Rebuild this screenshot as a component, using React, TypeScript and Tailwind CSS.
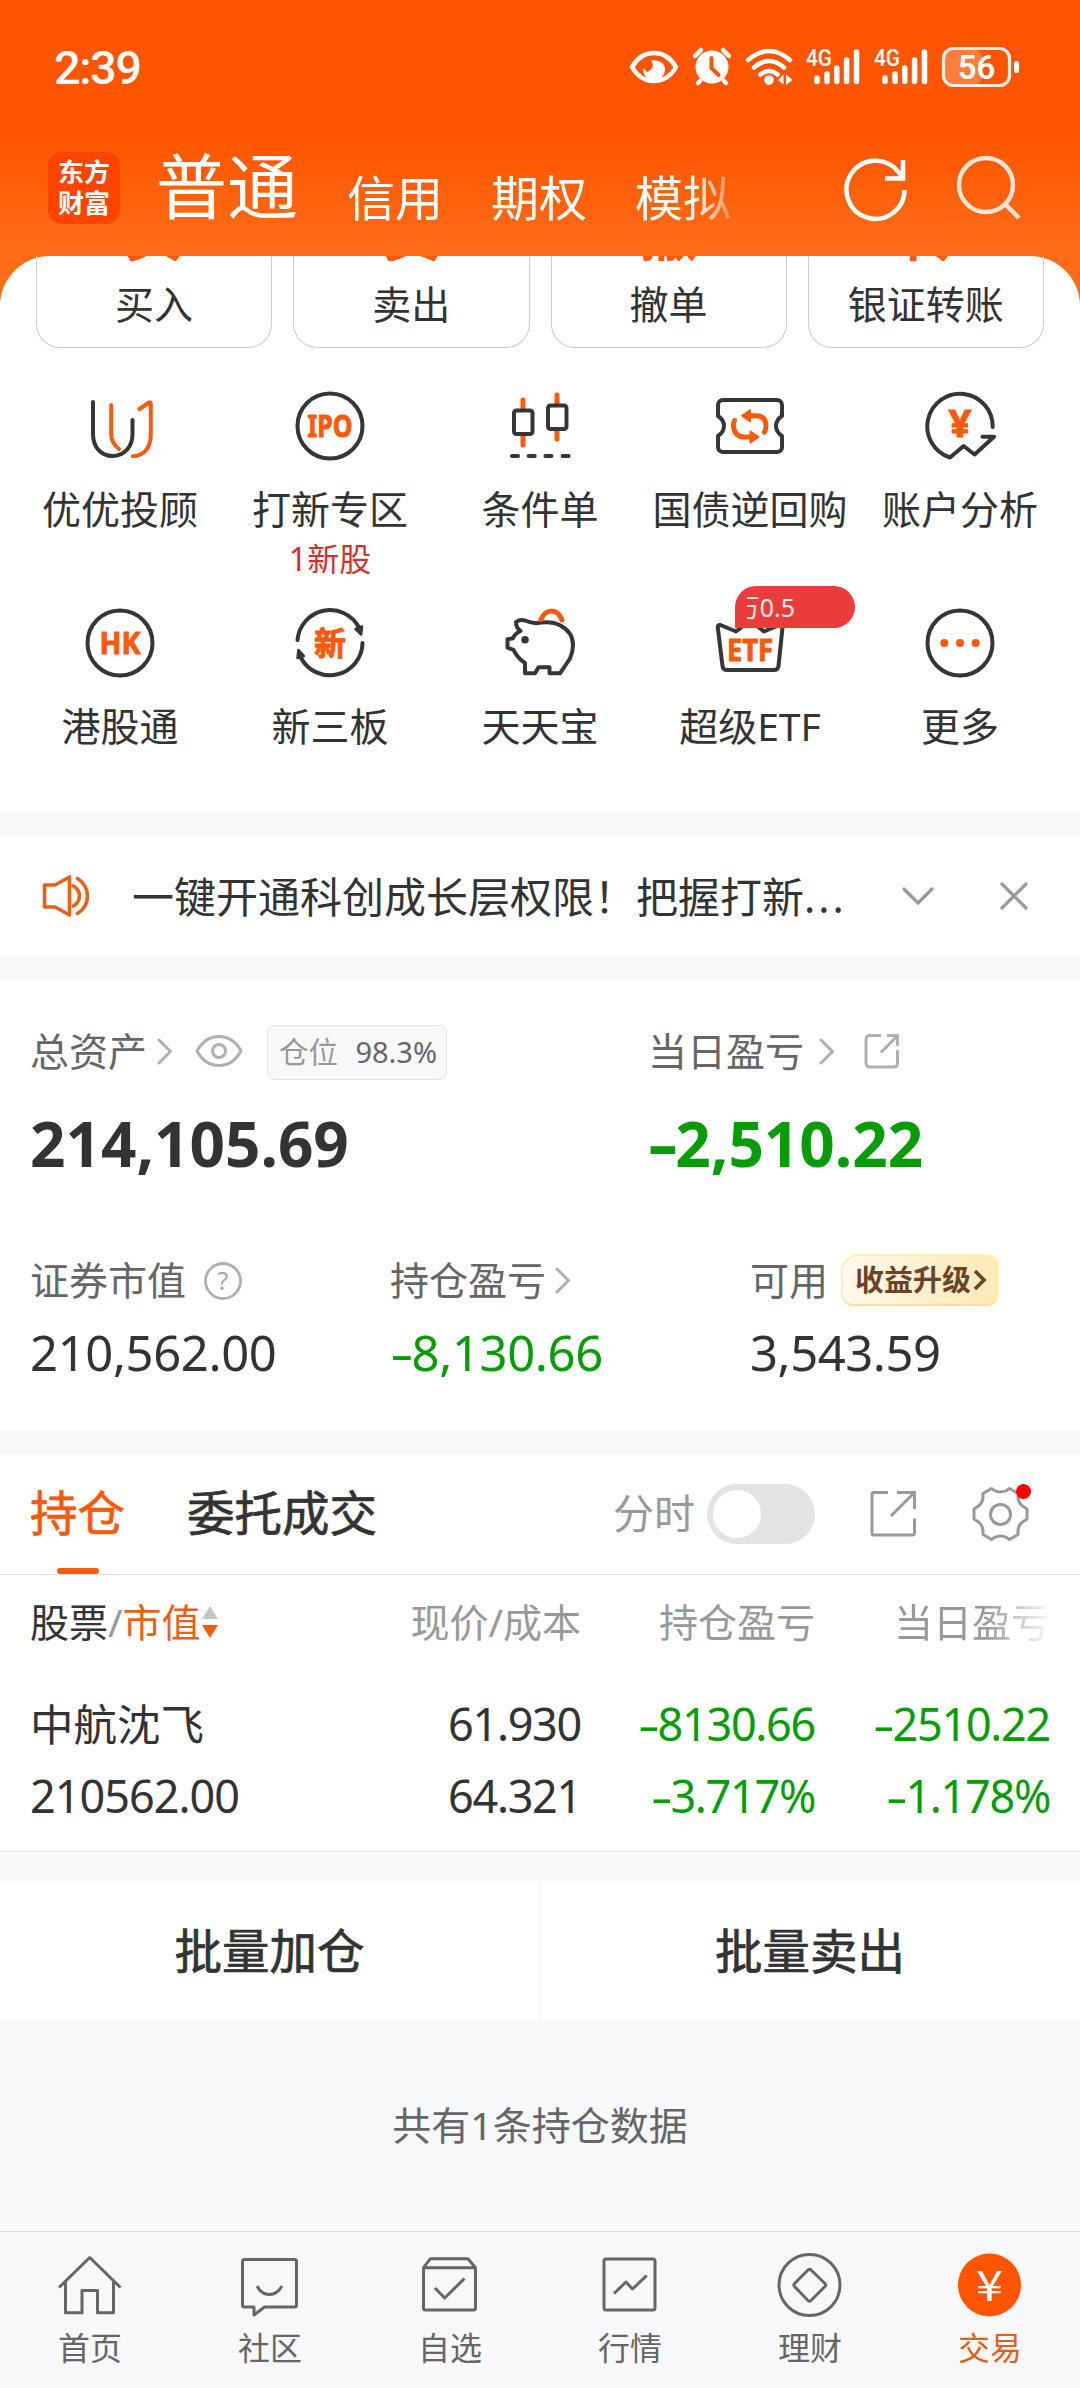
import type { ReactNode } from 'react';

const DARK = '#363636';
const ORANGE = '#fa5a0a';

const trades = [
  { glyph: '买', label: '买入' },
  { glyph: '卖', label: '卖出' },
  { glyph: '撤', label: '撤单' },
  { glyph: '转', label: '银证转账' },
];

function IconText({ children, y, size, width }: { children: string; y: number; size: number; width: number }) {
  return (
    <text
      x="36"
      y={y}
      fontSize={size}
      fontWeight="700"
      textAnchor="middle"
      textLength={width}
      lengthAdjust="spacingAndGlyphs"
      fill={ORANGE}
      stroke={ORANGE}
      strokeWidth="1"
    >
      {children}
    </text>
  );
}

const entries: { label: string; note?: string; badge?: boolean; icon: ReactNode }[] = [
  {
    label: '优优投顾',
    icon: (
      <>
        <path d="M9 12V44c0 13 8 22 19.500 22S48.500 57 48.500 44V30" stroke={DARK} />
        <path d="M27.200 15V44c0 7 2.500 11 7.800 15M55.500 19l9.500-6.500q1.800-.8 1.800 1.500V44c0 14-7 22-18 22.300" stroke={ORANGE} />
      </>
    ),
  },
  {
    label: '打新专区',
    note: '1新股',
    icon: (
      <>
        <circle cx="36" cy="36" r="32.500" stroke={DARK} />
        <IconText y={47} size={30} width={45}>IPO</IconText>
      </>
    ),
  },
  {
    label: '条件单',
    icon: (
      <>
        <path d="M19 10v9M19 46v9M53 5v9M53 41v8" stroke={ORANGE} strokeWidth="5" />
        <rect x="10" y="20.500" width="18.500" height="23.500" rx="2.500" stroke={DARK} />
        <rect x="44" y="15.500" width="18.500" height="23.500" rx="2.500" stroke={DARK} />
        <path d="M8 66h6M24.700 66h6M41.500 66h6M58.600 66h6" stroke={DARK} />
      </>
    ),
  },
  {
    label: '国债逆回购',
    icon: (
      <>
        <path d="M9 10H63a5 5 0 0 1 5 5V26q-6 4-6 10t6 10V57a5 5 0 0 1-5 5H9a5 5 0 0 1-5-5V46q6-4 6-10t-6-10V15a5 5 0 0 1 5-5z" stroke={DARK} />
        <path d="M35 25.700h7q10 0 10 10 0 4-1.600 6.500M20.500 30.500q-1.500 3-1 6.500 1.500 10 11 10h6" stroke={ORANGE} strokeWidth="5" />
        <path d="M28 25.700l8-5.500v11zM44.500 47l-8-5.500v11z" fill={ORANGE} stroke={ORANGE} strokeWidth="2" />
      </>
    ),
  },
  {
    label: '账户分析',
    icon: (
      <>
        <path d="M68.700 37A32.700 32.700 0 1 0 26 67.500L39.600 56l11 8.500L70 46.700H58.500" stroke={DARK} />
        <IconText y={47} size={37} width={23}>¥</IconText>
      </>
    ),
  },
  {
    label: '港股通',
    icon: (
      <>
        <circle cx="36" cy="36" r="32.500" stroke={DARK} />
        <IconText y={47} size={30} width={41}>HK</IconText>
      </>
    ),
  },
  {
    label: '新三板',
    icon: (
      <>
        <path d="M3.500 33A32.700 32.700 0 0 1 65 20.500M68.500 36A32.700 32.700 0 0 1 7 51" stroke={DARK} />
        <path d="M61.500 22l6.500-2.500-.8 8zM4.500 43l-1 8 6.500-2z" fill={DARK} stroke={DARK} strokeWidth="2.500" />
        <IconText y={48} size={32} width={32}>新</IconText>
      </>
    ),
  },
  {
    label: '天天宝',
    icon: (
      <>
        <path
          d="M12 15q4-3 9-1.500 6 2.500 11 2.800 15-3 24 2C65 23 69 30 69 38q0 7-3 13.500L56 66.300H45.500v-6H34.500L31 66.300H21V56Q13.500 51 9.500 42.800L3.500 40.700V32.300l5.500-1q2-5 7.500-7.300Q12 21 12 15z"
          stroke={DARK}
        />
        <path d="M37 12.500C41 2 53 .5 58 13" stroke={ORANGE} strokeWidth="5" />
        <circle cx="21" cy="32.700" r="3.800" fill={DARK} />
      </>
    ),
  },
  {
    label: '超级ETF',
    badge: true,
    icon: (
      <>
        <path d="M6.500 18l15.500 6.500 14-11 14 11 15.500-6.500q3.300-.5 3 2.500L64.500 59q-.5 4-4.500 4H13q-4 0-4.500-4L3.800 20.500q-.3-3 2.700-2.500z" stroke={DARK} />
        <IconText y={53.500} size={31} width={46}>ETF</IconText>
      </>
    ),
  },
  {
    label: '更多',
    icon: (
      <>
        <circle cx="36" cy="36" r="32.500" stroke={DARK} />
        <g fill={ORANGE}>
          <circle cx="20.300" cy="36" r="4" />
          <circle cx="36" cy="36" r="4" />
          <circle cx="51.700" cy="36" r="4" />
        </g>
      </>
    ),
  },
];

const tabs: { label: string; active?: boolean; icon: ReactNode }[] = [
  {
    label: '首页',
    icon: <path d="M2 35.500L32.700 5.500 63.500 35.500M8.500 30V60.800H25V38.500H40.500V60.800H56.500V30" />,
  },
  {
    label: '社区',
    icon: <path d="M7.500 7.500H57.500q2 0 2 2V53q0 2-2 2H27.500L17 63V55H7.500q-2 0-2-2V9.500q0-2 2-2zM20 34q4.500 8.500 12.300 8.500T45 34" />,
  },
  {
    label: '自选',
    icon: <path d="M6.500 15.700L13.500 6.700H51L58.500 15.700V56q0 2-2 2H8.500q-2 0-2-2zH58.500M18 36L27.700 46 47.500 26.500" />,
  },
  {
    label: '行情',
    icon: <path d="M9 7H56q2 0 2 2V56q0 2-2 2H9q-2 0-2-2V9q0-2 2-2zM17 41.500L29 30l6.500 7L49.700 23.500" />,
  },
  {
    label: '理财',
    icon: (
      <>
        <circle cx="32.500" cy="33" r="30.500" />
        <path d="M31 18q1.500-1.500 3 0L48 31.500q1.500 1.500 0 3L34 48.500q-1.500 1.500-3 0L17.500 34.500q-1.500-1.500 0-3z" />
      </>
    ),
  },
  {
    label: '交易',
    active: true,
    icon: (
      <>
        <circle cx="32.500" cy="33" r="31.500" fill="#ff5500" stroke="none" />
        <text x="32.500" y="49" fontSize="42" textAnchor="middle" textLength="27" lengthAdjust="spacingAndGlyphs" fill="#fff" stroke="none" className="font-['Noto_Sans_CJK_SC',sans-serif]">¥</text>
      </>
    ),
  },
];

function Chevron({ className = '' }: { className?: string }) {
  return (
    <svg width="18" height="28" viewBox="0 0 18 28" fill="none" stroke="#b0b0b0" strokeWidth="3" strokeLinecap="round" strokeLinejoin="round" className={className}>
      <path d="M3 3l11.500 11.500L3 26" />
    </svg>
  );
}

// Loss figure in green, with a wide minus sign
function Loss({ children }: { children: string }) {
  return (
    <span className="text-[#059c05]">
      <span className="inline-block w-[0.440em] origin-left scale-x-150 text-left">-</span>
      {children}
    </span>
  );
}

function Signal() {
  return (
    <svg width="56" height="44" viewBox="0 0 56 44" fill="none" stroke="#fff" strokeWidth="5.500" strokeLinecap="round">
      <text x="0" y="22" fontSize="24" fontWeight="500" textLength="26" lengthAdjust="spacingAndGlyphs" fill="#fff" stroke="none" className="font-['Roboto',sans-serif]">4G</text>
      <path d="M11 34v3.500M21 30v7.500M30.800 24v13.500M40.600 16v21.500M50.500 8v29.500" />
    </svg>
  );
}

function StatusBar() {
  return (
    <div className="flex h-[132px] items-start pl-[54px] pr-[59px] pt-[44px] text-white">
      <div className="h-[46px] font-['Roboto',sans-serif] text-[47px] font-medium leading-[48px] tracking-[-1.500px]">2:39</div>
      <svg width="50" height="44" viewBox="0 0 50 44" fill="none" stroke="#fff" strokeWidth="4.500" className="ml-auto">
        <path d="M3 23Q11 9 25 9t22 14Q39 37 25 37T3 23z" strokeLinejoin="round" />
        <path d="M22 16q5 8-4 12l-4-4q0 11 10 12 11 0 12-10 0-10-14-10z" fill="#fff" stroke="none" />
      </svg>
      <svg width="42" height="44" viewBox="0 0 42 44" fill="none" stroke="#fff" strokeWidth="4.500" strokeLinecap="round" className="ml-[12px]">
        <circle cx="21" cy="23" r="16.500" fill="#fff" stroke="none" />
        <path d="M4 12l6-6M38 12l-6-6M9 37l-2 2M33 37l2 2" />
        <path d="M20.500 14v10l7 7" stroke="#ff5500" strokeWidth="4" />
      </svg>
      <svg width="50" height="44" viewBox="0 0 50 44" fill="none" stroke="#fff" strokeWidth="4.500" strokeLinecap="round" className="ml-[11px]">
        <path d="M4 16Q25-2 46 16M10 23.500q15-13 30 0M16.500 30.500q8.500-7 17 0" />
        <circle cx="25" cy="36" r="4.800" fill="#fff" stroke="none" />
        <path d="M34 36l5.500-5.500v10zM42 30.500l6.500 5.500-6.500 5z" fill="#fff" stroke="none" />
      </svg>
      <div className="ml-[12px] flex gap-[12px]">
        <Signal />
        <Signal />
      </div>
      <svg width="80" height="44" viewBox="2 0 80 44" fill="none" className="ml-[11px]">
        <rect x="6" y="6" width="37" height="34" rx="7" fill="#fff" fillOpacity=".24" />
        <rect x="4.500" y="4.500" width="66" height="37" rx="10" stroke="#fff" strokeOpacity=".9" strokeWidth="3.200" />
        <rect x="75" y="17" width="5" height="12" rx="2.500" fill="#fff" />
        <text x="37.500" y="34.500" fontSize="33" fontWeight="600" textAnchor="middle" fill="#fff" className="font-['Roboto',sans-serif]">56</text>
      </svg>
    </div>
  );
}

function Header() {
  return (
    <header className="flex h-[124px] items-start pl-[48px] text-white">
      <div className="mt-[20px] flex h-[72px] w-[72px] flex-col items-center justify-center rounded-[14px] bg-[#ff4400] text-[26px] font-bold leading-[31px]">
        <span>东方</span>
        <span>财富</span>
      </div>
      <div className="ml-[36px] mt-[13px] text-[71px] leading-[82px]">普通</div>
      <div className="ml-[49px] mt-[36px] flex gap-[48px] text-[48px] leading-[60px] [mask-image:linear-gradient(to_right,#000_345px,transparent_400px)]">
        <span>信用</span>
        <span>期权</span>
        <span>模拟</span>
      </div>
      <svg width="66" height="66" viewBox="0 0 66 66" fill="none" stroke="#fff" strokeWidth="4.500" className="ml-auto mt-[25px]">
        <path d="M61.500 33A29 29 0 1 1 55 14.500L61 22" />
        <path d="M60 3v18.500H42" />
      </svg>
      <svg width="66" height="66" viewBox="0 0 66 66" fill="none" stroke="#ffe3d3" strokeWidth="4.500" className="ml-[46px] mr-[59px] mt-[23px]">
        <circle cx="31" cy="30" r="27" />
        <path d="M50 49l14 14" />
      </svg>
    </header>
  );
}

function TradeCards() {
  return (
    <div className="flex h-[92px] gap-[21px] px-[36px]">
      {trades.map((t) => (
        <div key={t.label} className="flex flex-1 flex-col items-center overflow-hidden rounded-b-[24px] border-x border-b border-[#cccccc]">
          <div className="flex h-[5px] items-end overflow-hidden">
            <span className="-mb-[2px] text-[58px] font-bold leading-[58px] text-[#fa5a0a]">{t.glyph}</span>
          </div>
          <span className="mt-[13px] text-[39px] leading-[60px]">{t.label}</span>
        </div>
      ))}
    </div>
  );
}

function Entries() {
  return (
    <div className="grid grid-cols-5 px-[15px] pt-[42px]">
      {entries.map((e) => (
        <div key={e.label} className="relative flex h-[217px] flex-col items-center">
          <svg width="72" height="72" viewBox="0 0 72 72" fill="none" strokeWidth="4" strokeLinecap="round" strokeLinejoin="round">
            {e.icon}
          </svg>
          <span className="mt-[22px] whitespace-nowrap text-[39px] leading-[50px]">{e.label}</span>
          {e.note && <span className="mt-[5px] text-[32px] leading-[40px] text-[#d03030]">{e.note}</span>}
          {e.badge && (
            <div className="absolute left-[90px] top-[-21px] h-[42px] w-[120px] rounded-[21px] rounded-bl-none bg-[#eb3c3c] pl-[12px]">
              <div className="flex w-[48px] justify-end overflow-hidden whitespace-nowrap text-[25px] leading-[42px] text-white/90">
                <span>万0.5</span>
              </div>
            </div>
          )}
        </div>
      ))}
    </div>
  );
}

function Notice() {
  return (
    <div className="flex h-[120px] items-center bg-white pl-[42px]">
      <svg width="48" height="44" viewBox="0 0 48 44" fill="none" stroke="#e8611a" strokeWidth="3.600" strokeLinejoin="round" strokeLinecap="round">
        <path d="M2.500 11H13L27.500 3V41L13 33H2.500zM31.500 12q6 4 6 10t-6 10M35.500 4.500q10 6.500 10 17.500t-10 17.500" />
      </svg>
      <span className="ml-[42px] whitespace-nowrap text-[42px]">
        一键开通科创成长层权限！把握打新<span className="tracking-[3px]">...</span>
      </span>
      <svg width="34" height="20" viewBox="0 0 34 20" fill="none" stroke="#999" strokeWidth="3.200" strokeLinecap="round" strokeLinejoin="round" className="ml-auto">
        <path d="M3 3l14 14L31 3" />
      </svg>
      <svg width="30" height="30" viewBox="0 0 30 30" fill="none" stroke="#999" strokeWidth="3.200" strokeLinecap="round" className="ml-[64px] mr-[51px]">
        <path d="M3 3l24 24M27 3L3 27" />
      </svg>
    </div>
  );
}

function Assets() {
  return (
    <div className="h-[450px] bg-white pl-[30px] pt-[44px] text-[39px] text-[#666666]">
      <div className="flex">
        <div className="w-[618px]">
          <div className="flex h-[54px] items-center">
            <span>总资产</span>
            <Chevron className="ml-[9px]" />
            <svg width="48" height="36" viewBox="0 0 48 36" fill="none" stroke="#b0b0b0" strokeWidth="3" className="ml-[21px]">
              <path d="M2 18Q10 3.500 24 3.500T46 18Q38 32.500 24 32.500T2 18z" strokeLinejoin="round" />
              <circle cx="24" cy="18" r="6.500" />
            </svg>
            <div className="ml-[24px] mt-[2px] flex h-[55px] w-[180px] items-center justify-between rounded-[8px] border border-[#e2e3e5] bg-[#f7f8fa] pl-[11px] pr-[9px] text-[29.500px]">
              <span className="text-[#999999]">仓位</span>
              <span className="text-[29px]">98.3%</span>
            </div>
          </div>
          <div className="mt-[30px] text-[62px] font-bold leading-[70px] text-[#333333]">214,105.69</div>
        </div>
        <div>
          <div className="flex h-[54px] items-center">
            <span>当日盈亏</span>
            <Chevron className="ml-[14px]" />
            <svg width="36" height="36" viewBox="0 0 36 36" fill="none" stroke="#b0b0b0" strokeWidth="3" className="ml-[28px]">
              <path d="M17 2.500H6q-4 0-4 4V30q0 4 4 4H29.500q4 0 4-4V17M23 2.500H33.500V13M33 3L17 19.500" />
            </svg>
          </div>
          <div className="mt-[30px] text-[62px] font-bold leading-[70px]"><Loss>2,510.22</Loss></div>
        </div>
      </div>
      <div className="mt-[76px] flex">
        <div className="w-[360px]">
          <div className="flex h-[52px] items-center">
            <span>证券市值</span>
            <svg width="40" height="40" viewBox="0 0 40 40" fill="none" className="ml-[17px]">
              <circle cx="20" cy="21" r="17.500" stroke="#b0b0b0" strokeWidth="2.800" />
              <text x="20" y="30" fontSize="25" textAnchor="middle" fill="#a6a6a6">?</text>
            </svg>
          </div>
          <div className="mt-[16px] text-[49px] leading-[60px] tracking-[-0.400px] text-[#333333]">210,562.00</div>
        </div>
        <div className="w-[360px]">
          <div className="flex h-[52px] items-center">
            <span>持仓盈亏</span>
            <Chevron className="ml-[8px]" />
          </div>
          <div className="mt-[16px] text-[49px] leading-[60px] tracking-[-0.400px]"><Loss>8,130.66</Loss></div>
        </div>
        <div>
          <div className="flex h-[52px] items-center">
            <span>可用</span>
            <div className="ml-[13px] flex h-[52px] w-[158px] items-center rounded-[12px] rounded-tl-[18px] border-2 border-r-[#fcf3a0] border-t-[#fdf3a4] border-b-[#f8e29a] border-l-[#fbeec4] bg-linear-to-r from-[#fffaf0] via-[#feefcf] to-[#ffe9b8] pl-[12px] text-[29px] font-bold text-[#6b4428]">
              收益升级
              <svg width="14" height="22" viewBox="0 0 14 22" fill="none" stroke="#6b4428" strokeWidth="3.600" className="ml-[2px]">
                <path d="M2 2l9 9-9 9" />
              </svg>
            </div>
          </div>
          <div className="mt-[16px] text-[49px] leading-[60px] tracking-[-0.500px] text-[#333333]">3,543.59</div>
        </div>
      </div>
    </div>
  );
}

function PositionTabs() {
  return (
    <div className="flex h-[121px] items-start border-b border-[#dedfe1] bg-white pl-[30px] text-[47.500px]">
      <div className="flex flex-col items-center text-[#f55a0b]">
        <span className="mt-[24px] leading-[70px] [-webkit-text-stroke:0.700px]">持仓</span>
        <span className="mt-[20px] h-[6px] w-[42px] rounded-[3px] bg-[#fa5a0a]" />
      </div>
      <span className="ml-[62px] mt-[24px] leading-[70px] [-webkit-text-stroke:0.700px]">委托成交</span>
      <div className="ml-auto mt-[30px] flex h-[60px] items-center pr-[51px]">
        <span className="text-[41px] text-[#999999]">分时</span>
        <div className="ml-[12px] flex h-[60px] w-[108px] items-center rounded-full bg-[#e4e4e6] pl-[6px]">
          <div className="h-[48px] w-[48px] rounded-full bg-white" />
        </div>
        <svg width="48" height="48" viewBox="0 0 48 48" fill="none" stroke="#999" strokeWidth="3" className="ml-[54px]">
          <path d="M19 2.500H5q-2 0-2 2V43q0 2 2 2H43.500q2 0 2-2V28.500M28 2.500H45.500V19M45 3L22 26" />
        </svg>
        <div className="relative ml-[55px]">
          <svg width="57" height="57" viewBox="0 0 57 57" fill="none" stroke="#999" strokeWidth="3" strokeLinejoin="round">
            <path d="M19.500 2.500l3 2q6 3 12 0l3-2 8.500 5v4q.5 5.500 4.500 8.500l4.500 3v10l-4.500 3q-4 3-4.500 8.500v4l-8.500 5-3-2q-6-3-12 0l-3 2-8.500-5v-4q-.5-5.500-4.500-8.500L2 33V23l4.500-3q4-3 4.500-8.500v-4z" />
            <circle cx="28.500" cy="28.500" r="10" />
          </svg>
          <div className="absolute right-[-2px] top-[-2px] h-[15px] w-[15px] rounded-full bg-[#ff0000]" />
        </div>
      </div>
    </div>
  );
}

function Positions() {
  return (
    <div className="h-[277px] border-b border-[#e6e7e9] bg-white pl-[30px] pr-[30px] pt-[22px]">
      <div className="grid grid-cols-[317px_234px_234px_235px] text-right text-[39px] leading-[50px] text-[#999999]">
        <div className="flex items-center">
          <span className="text-[#333333]">股票</span>
          <span>/</span>
          <span className="text-[#e8611a]">市值</span>
          <svg width="18" height="34" viewBox="0 0 18 34">
            <path d="M9 1l8 13H1z" fill="#c4c4c4" />
            <path d="M9 33L1 20h16z" fill="#fa5a0a" />
          </svg>
        </div>
        <span>现价/成本</span>
        <span>持仓盈亏</span>
        <span className="[mask-image:linear-gradient(to_right,#000_170px,transparent_238px)]">当日盈亏</span>
      </div>
      <div className="mt-[41px] grid grid-cols-[317px_234px_234px_235px] text-right text-[45px] leading-[72px] tracking-[-1.300px]">
        <span className="text-left text-[43.500px] tracking-normal">中航沈飞</span>
        <span>61.930</span>
        <Loss>8130.66</Loss>
        <Loss>2510.22</Loss>
        <span className="text-left tracking-[-1px]">210562.00</span>
        <span>64.321</span>
        <Loss>3.717%</Loss>
        <Loss>1.178%</Loss>
      </div>
    </div>
  );
}

function TabBar() {
  return (
    <nav className="mt-auto grid h-[157px] grid-cols-6 border-t border-[#dfe0e3] bg-[#f8f8fa]">
      {tabs.map((t) => (
        <div key={t.label} className={t.active ? 'flex flex-col items-center pt-[20px] text-[#e0601c]' : 'flex flex-col items-center pt-[20px] text-[#666666]'}>
          <svg width="66" height="66" viewBox="0 0 66 66" fill="none" stroke="#666" strokeWidth="3" strokeLinejoin="round">
            {t.icon}
          </svg>
          <span className="mt-[10px] text-[32px] leading-[40px]">{t.label}</span>
        </div>
      ))}
    </nav>
  );
}

export default function App() {
  return (
    <div className="flex h-[2388px] w-[1080px] flex-col overflow-hidden bg-[#f7f8fa] font-['Noto_Sans','Noto_Sans_CJK_SC',sans-serif] text-[#333333]">
      <div className="bg-[linear-gradient(to_bottom,#ff5500_135px,#ff6c18_250px)]">
        <StatusBar />
        <Header />
        <div className="h-[556px] rounded-t-[50px] bg-white">
          <TradeCards />
          <Entries />
        </div>
      </div>
      <div className="h-[24px] shrink-0" />
      <Notice />
      <div className="h-[24px] shrink-0" />
      <Assets />
      <div className="h-[24px] shrink-0" />
      <PositionTabs />
      <Positions />
      {/* Batch actions */}
      <div className="mt-[29px] grid h-[139px] grid-cols-2 bg-white text-center text-[47.500px] leading-[139px] [-webkit-text-stroke:0.700px]">
        <span className="border-r border-[#f3f3f5]">批量加仓</span>
        <span>批量卖出</span>
      </div>
      <p className="mt-[80px] text-center text-[39px] leading-[50px] text-[#666666]">共有1条持仓数据</p>
      <TabBar />
    </div>
  );
}
